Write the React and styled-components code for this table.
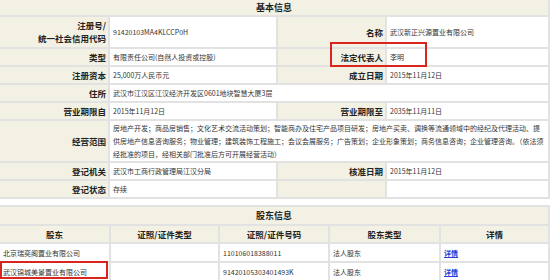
import React from 'react'
import styled, { createGlobalStyle } from 'styled-components'

const GlobalStyle = createGlobalStyle`
  html, body {
    margin: 0;
    padding: 0;
    background: #fff;
  }
  body {
    font-family: "Noto Sans CJK SC", "Noto Sans", sans-serif;
    color: #333;
  }
`

const basic = [
  [['注册号/', '统一社会信用代码'], '91420103MA4KLCCP0H', '名称', '武汉新正兴源置业有限公司'],
  ['类型', '有限责任公司(自然人投资或控股)', '法定代表人', '李明'],
  ['注册资本', '25,000万人民币元', '成立日期', '2015年11月12日'],
  ['住所', '武汉市江汉区江汉经济开发区0601地块智慧大厦3层'],
  ['营业期限自', '2015年11月12日', '营业期限至', '2035年11月11日'],
  [
    '经营范围',
    '房地产开发；商品房销售；文化艺术交流活动策划；智能商办及住宅产品项目研发；房地产买卖、调换等流通领域中的经纪及代理活动、提供房地产信息咨询服务；物业管理；建筑装饰工程施工；会议会展服务；广告策划；企业形象策划；商务信息咨询；企业管理咨询。（依法须经批准的项目，经相关部门批准后方可开展经营活动）',
  ],
  ['登记机关', '武汉市工商行政管理局江汉分局', '核准日期', '2015年11月12日'],
  ['登记状态', '存续', '', ''],
]

const holders = [
  ['北京瑞奕阁置业有限公司', '', '110106018388011', '法人股东'],
  ['武汉锦城美景置业有限公司', '', '91420105303401493K', '法人股东'],
]

const App = () => {
  return (
    <Page>
      <GlobalStyle />
      <BasicTable>
        <TitleCell $span={4}>基本信息</TitleCell>
        {basic.map((row, i) => (
          <React.Fragment key={i}>
            <Label>
              {Array.isArray(row[0]) ? row[0].map((t) => <span key={t}>{t}</span>) : row[0]}
            </Label>
            <Value $span={row.length === 2 ? 3 : 1} $wrap={row[0] === '经营范围'}>
              {row[1]}
            </Value>
            {row.length === 4 && (
              <>
                <Label>{row[2]}</Label>
                <Value>{row[3]}</Value>
              </>
            )}
          </React.Fragment>
        ))}
      </BasicTable>

      <HolderTable>
        <TitleCell $span={5}>股东信息</TitleCell>
        <HeadCell>股东</HeadCell>
        <HeadCell>证照/证件类型</HeadCell>
        <HeadCell>证照/证件号码</HeadCell>
        <HeadCell>股东类型</HeadCell>
        <HeadCell>详情</HeadCell>
        {holders.map((h, i) => (
          <React.Fragment key={i}>
            {h.map((c, j) => (
              <DataCell key={j}>{c}</DataCell>
            ))}
            <DataCell>
              <DetailLink href="#">详情</DetailLink>
            </DataCell>
          </React.Fragment>
        ))}
      </HolderTable>

      <Mark $x={330} $y={42} $w={97} $h={25} />
      <Mark $x={0} $y={261} $w={108} $h={18} />
    </Page>
  )
}

export default App

const Page = styled.div`
  position: relative;
  width: 550px;
  height: 280px;
  overflow: hidden;
  background: #fff;
`

const BasicTable = styled.div`
  display: grid;
  grid-template-columns: 108px 166px 107px 161px;
  grid-template-rows: 15px 30px 16px 16px 16px 16px 40px 16px 16px;
  gap: 2px;
  padding: 0 2px 2px 0;
  background: #e2e2e2;
`

const HolderTable = styled.div`
  display: grid;
  grid-template-columns: 109px 107px 108px 109px 107px;
  grid-template-rows: 17px 16px 17px 17px;
  gap: 2px;
  padding: 2px 2px 0 0;
  margin-top: 6px;
  background: #e2e2e2;
`

const TitleCell = styled.div`
  grid-column: span ${(p) => p.$span};
  background: #f2f1e4;
  display: flex;
  align-items: center;
  justify-content: center;
  font-size: 9px;
  font-weight: bold;
  color: #222;
`

const Label = styled.div`
  background: #f2f1e4;
  display: flex;
  flex-direction: column;
  align-items: flex-end;
  justify-content: center;
  padding-right: 2px;
  font-size: 8.5px;
  line-height: 13px;
  font-weight: bold;
  color: #222;
  white-space: nowrap;
`

const Value = styled.div`
  grid-column: span ${(p) => p.$span || 1};
  background: #fff;
  display: flex;
  align-items: center;
  padding: 0 3px;
  font-size: 7px;
  line-height: 13px;
  color: #333;
  white-space: ${(p) => (p.$wrap ? 'normal' : 'nowrap')};
  overflow: hidden;
`

const HeadCell = styled.div`
  background: #f2f1e4;
  display: flex;
  align-items: center;
  justify-content: center;
  font-size: 8.5px;
  font-weight: bold;
  color: #222;
`

const DataCell = styled.div`
  background: #fff;
  display: flex;
  align-items: center;
  padding: 0 3px;
  font-size: 7px;
  color: #333;
  white-space: nowrap;
  overflow: hidden;
`

const DetailLink = styled.a`
  color: #2b3bd6;
  font-weight: bold;
  text-decoration: underline;
`

const Mark = styled.div`
  position: absolute;
  left: ${(p) => p.$x}px;
  top: ${(p) => p.$y}px;
  width: ${(p) => p.$w}px;
  height: ${(p) => p.$h}px;
  box-sizing: border-box;
  border: 2px solid #d8261e;
  pointer-events: none;
`
